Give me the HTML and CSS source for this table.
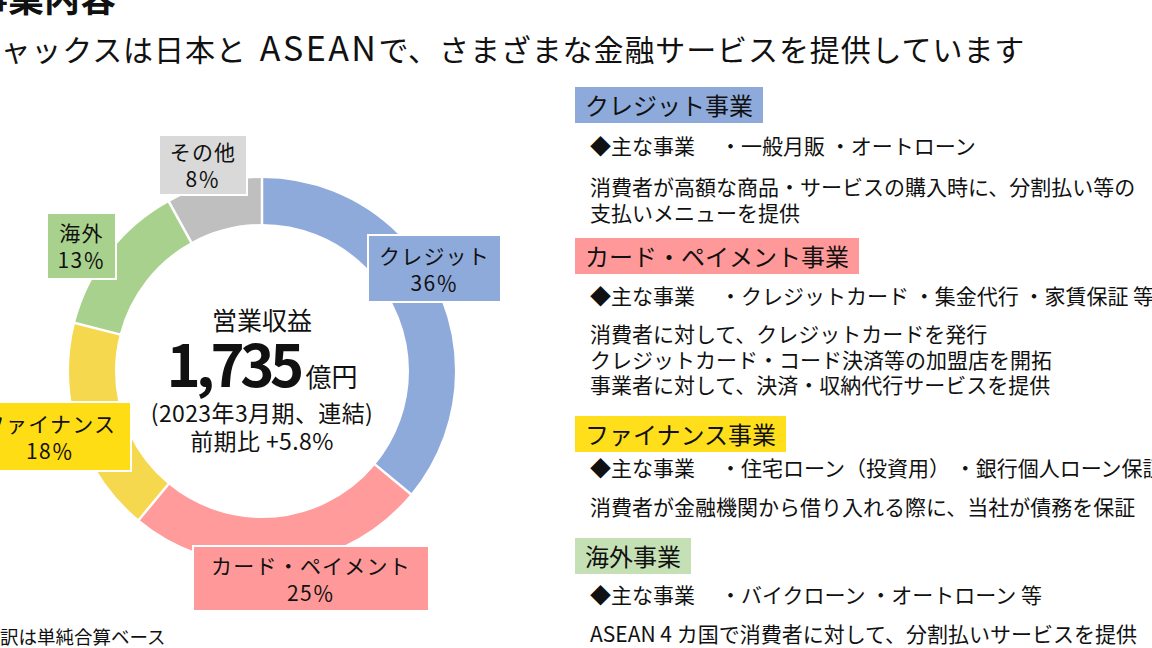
FILE: index.html
```html
<!DOCTYPE html>
<html lang="ja">
<head>
<meta charset="utf-8">
<title>事業内容</title>
<link rel="stylesheet" href="styles.css">
</head>
<body>
<div class="page">
  <header class="head">
    <h1 class="title">事業内容</h1>
    <p class="lead">ジャックスは日本と<span class="latin">ASEAN</span>で、さまざまな金融サービスを提供しています</p>
  </header>
  <main class="content">
    <section class="chart">
      <div class="donut-wrap">
        <svg class="donut" viewBox="0 0 400 400" width="400" height="400">
          <g transform="rotate(-90 200 200)" fill="none" stroke-width="46">
            <circle cx="200" cy="200" r="170" stroke="#8eaadb" stroke-dasharray="384.53 1068.14" stroke-dashoffset="0"/>
            <circle cx="200" cy="200" r="170" stroke="#ff9b9b" stroke-dasharray="267.04 1068.14" stroke-dashoffset="-384.53"/>
            <circle cx="200" cy="200" r="170" stroke="#f6d84f" stroke-dasharray="192.27 1068.14" stroke-dashoffset="-651.57"/>
            <circle cx="200" cy="200" r="170" stroke="#a9d18e" stroke-dasharray="138.86 1068.14" stroke-dashoffset="-843.84"/>
            <circle cx="200" cy="200" r="170" stroke="#bfbfbf" stroke-dasharray="85.45 1068.14" stroke-dashoffset="-982.70"/>
          </g>
          <g stroke="#ffffff" stroke-width="2.5">
            <line x1="200" y1="55" x2="200" y2="5"/>
            <line x1="311.7" y1="292.4" x2="350.2" y2="324.3"/>
            <line x1="107.6" y1="311.7" x2="75.7" y2="350.2"/>
            <line x1="59.6" y1="163.9" x2="11.1" y2="151.5"/>
            <line x1="130.1" y1="72.9" x2="106.0" y2="29.1"/>
          </g>
        </svg>
        <div class="center">
          <p class="c-label">営業収益</p>
          <p class="c-value"><span class="num">1,735</span><span class="unit">億円</span></p>
          <p class="c-sub">(2023年3月期、連結)</p>
          <p class="c-sub">前期比 +5.8%</p>
        </div>
      </div>
      <div class="label lb-other">その他<br>8％</div>
      <div class="label lb-overseas">海外<br>13％</div>
      <div class="label lb-credit">クレジット<br>36％</div>
      <div class="label lb-finance">ファイナンス<br>18％</div>
      <div class="label lb-card">カード・ペイメント<br>25％</div>
      <p class="note">※内訳は単純合算ベース</p>
    </section>
    <section class="biz">
      <div class="seg seg-credit">
        <h2 class="tag tag-credit">クレジット事業</h2>
        <p class="main">◆主な事業<span class="gap"></span>・一般月販 ・オートローン</p>
        <p class="desc">消費者が高額な商品・サービスの購入時に、分割払い等の<br>支払いメニューを提供</p>
      </div>
      <div class="seg seg-card">
        <h2 class="tag tag-card">カード・ペイメント事業</h2>
        <p class="main">◆主な事業<span class="gap"></span>・クレジットカード ・集金代行 ・家賃保証 等</p>
        <p class="desc">消費者に対して、クレジットカードを発行<br>クレジットカード・コード決済等の加盟店を開拓<br>事業者に対して、決済・収納代行サービスを提供</p>
      </div>
      <div class="seg seg-finance">
        <h2 class="tag tag-finance">ファイナンス事業</h2>
        <p class="main">◆主な事業<span class="gap"></span>・住宅ローン（投資用） ・銀行個人ローン保証</p>
        <p class="desc">消費者が金融機関から借り入れる際に、当社が債務を保証</p>
      </div>
      <div class="seg seg-overseas">
        <h2 class="tag tag-overseas">海外事業</h2>
        <p class="main">◆主な事業<span class="gap"></span>・バイクローン ・オートローン 等</p>
        <p class="desc">ASEAN 4 カ国で消費者に対して、分割払いサービスを提供</p>
      </div>
    </section>
  </main>
</div>
</body>
</html>
```

FILE: styles.css
```css
html, body {
  margin: 0;
  padding: 0;
  background: #ffffff;
}
body {
  width: 1152px;
  height: 648px;
  overflow: hidden;
  font-family: "Noto Sans CJK JP", "Noto Sans", sans-serif;
  color: #111111;
}
p, h1, h2 {
  margin: 0;
  font-weight: normal;
}
.page {
  display: flow-root;
  width: 1152px;
  height: 648px;
  overflow: hidden;
}
.head {
  display: flow-root;
  height: 66px;
}
.title {
  margin: -24px 0 0 -28px;
  font-size: 36px;
  line-height: 40px;
  font-weight: bold;
  white-space: nowrap;
}
.lead {
  margin: 14px 0 0 -29px;
  font-size: 30px;
  line-height: 36px;
  height: 36px;
  letter-spacing: 0.9px;
  white-space: nowrap;
}
.lead .latin {
  font-size: 34px;
  line-height: 30px;
  letter-spacing: 2.5px;
  margin-left: 13px;
}
.content {
  display: flex;
  height: 582px;
}
.chart {
  position: relative;
  width: 575px;
  flex: 0 0 575px;
}
.donut-wrap {
  position: relative;
  width: 400px;
  height: 400px;
  margin: 105px 0 0 62px;
}
.donut {
  display: block;
}
.center {
  position: absolute;
  inset: 0;
  display: flex;
  flex-direction: column;
  align-items: center;
  justify-content: center;
  padding-top: 15px;
  box-sizing: border-box;
  text-align: center;
}
.c-label {
  font-size: 25px;
  line-height: 30px;
}
.c-value {
  line-height: 56px;
  height: 56px;
  white-space: nowrap;
}
.c-value .num {
  font-size: 58px;
  font-weight: bold;
  letter-spacing: -4.5px;
}
.c-value .unit {
  font-size: 26px;
  margin-left: 6px;
}
.c-sub {
  font-size: 23px;
  line-height: 28px;
  letter-spacing: 0.4px;
  white-space: nowrap;
}
.c-value + .c-sub {
  margin-top: 8px;
}
.label {
  position: absolute;
  box-sizing: border-box;
  outline: 2px solid #ffffff;
  font-size: 21px;
  line-height: 27px;
  letter-spacing: 1.2px;
  text-align: center;
  white-space: nowrap;
  display: flex;
  flex-direction: column;
  justify-content: center;
}
.lb-other {
  left: 160px; top: 70px; width: 86px; height: 58px;
  background: #d9d9d9;
}
.lb-overseas {
  left: 48px; top: 148px; width: 67px; height: 64px;
  background: #a9d18e;
}
.lb-credit {
  left: 369px; top: 170px; width: 131px; height: 65px;
  background: #8eaadb;
}
.lb-finance {
  left: -30px; top: 337px; width: 160px; height: 67px;
  background: #ffdd15;
}
.lb-card {
  left: 194px; top: 481px; width: 234px; height: 63px;
  background: #ff9999;
}
.note {
  margin: 54px 0 0 -37px;
  font-size: 18.5px;
  line-height: 22px;
  white-space: nowrap;
}
.biz {
  flex: 1;
  padding-top: 21px;
  white-space: nowrap;
}
.tag {
  display: block;
  width: fit-content;
  box-sizing: border-box;
  height: 36px;
  padding: 0 10px;
  font-size: 24px;
  line-height: 36px;
}
.tag-credit { background: #8eaadb; }
.tag-card { background: #ff9999; }
.tag-finance { background: #ffdf1c; }
.tag-overseas { background: #c5e0b4; }
.main {
  margin-left: 15px;
  font-size: 21px;
  line-height: 26px;
}
.main .gap {
  display: inline-block;
  width: 25px;
}
.desc {
  margin-left: 15px;
  font-size: 21px;
  line-height: 25.5px;
}
.seg-credit .main { margin-top: 9px; }
.seg-credit .desc { margin-top: 16px; }
.seg-card { margin-top: 13px; }
.seg-card .main { margin-top: 8px; }
.seg-card .desc { margin-top: 13px; }
.seg-finance { margin-top: 18px; }
.seg-finance .main { margin-top: 2px; }
.seg-finance .desc { margin-top: 14px; }
.seg-overseas { margin-top: 19px; }
.seg-overseas .main { margin-top: 7px; }
.seg-overseas .desc { margin-top: 14px; }
```
